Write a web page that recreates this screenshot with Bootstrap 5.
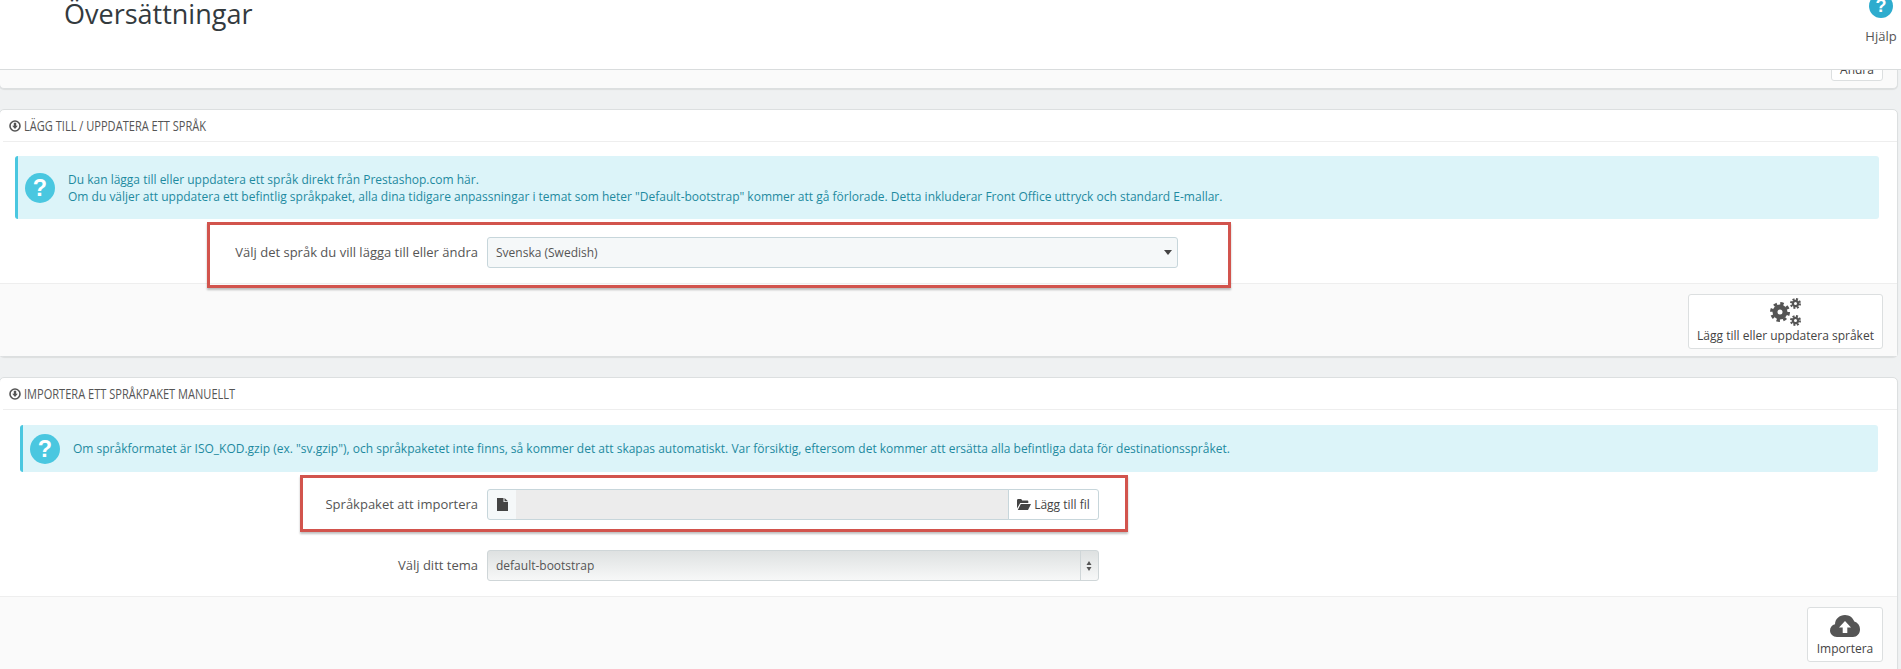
<!DOCTYPE html>
<html lang="sv">
<head>
<meta charset="utf-8">
<title>Översättningar</title>
<link href="https://cdn.jsdelivr.net/npm/bootstrap@5.3.0/dist/css/bootstrap.min.css" rel="stylesheet">
<style>
html,body{height:669px;overflow:hidden}
body{background:#eff1f2;font-family:"Open Sans",sans-serif;font-size:12px;color:#555;padding-right:3px}
.topbar{height:70px;margin-right:-3px;background:#fff;border-bottom:1px solid #d9dcdd;position:relative;z-index:3;overflow:hidden;padding:0 2px 0 64px}
.page-name{font-size:27px;line-height:30px;font-weight:400;color:#333a3e;margin:-1px 0 0}
.help-link{width:36px;margin-top:-6px;color:#555;font-size:13px;line-height:18px;text-align:center}
.help-link svg{display:block;margin:0 auto 9px}
.pane{background:#fff;border:1px solid #dcdfe0;border-radius:5px;box-shadow:0 1px 1px rgba(0,0,0,.08);margin:0 0 20px -1px}
.pane-stub{height:19px;background:#fafafa;border-top:0;border-radius:0 0 5px 5px;overflow:hidden;padding:0 14px 7px 0}
.pane-head{height:32px;margin:0 0 0 3px;border-bottom:1px solid #eeeeee;padding-left:6px;font-size:14px;color:#555;gap:3px}
.squeezed{display:inline-block;white-space:nowrap;transform:scaleX(.79);transform-origin:left center}
.tip{margin:14px 18px 0 15px;background:#dcf4f9;border-left:3px solid #4ac7e0;border-radius:3px;color:#1e8aa0;font-size:12px;line-height:17px;gap:13px;padding:0 12px 0 7px;height:63px}
.tip-two{margin:15px 19px 0 20px;height:47px}
.form-line{gap:9px;position:relative}
.line-lang{margin:18px 0 15px}
.lbl{width:478px;text-align:right;font-size:13px;color:#555}
.pick{width:691px;height:31px;background-color:#f5f8f9;border:1px solid #c7d6db;border-radius:3px;font-size:12px;color:#555;padding:0 8px;background-image:url("data:image/svg+xml,%3Csvg xmlns='http://www.w3.org/2000/svg' width='8' height='5'%3E%3Cpath d='M0 0h8L4 5z' fill='%23444'/%3E%3C/svg%3E");background-size:8px 5px;background-position:right 5px center}
.pick-native{width:612px;border-color:#cfd6d8;background-color:transparent;background-image:url("data:image/svg+xml,%3Csvg xmlns='http://www.w3.org/2000/svg' width='6' height='10'%3E%3Cpath d='M3 0l2.500 4h-5zM3 10L.5 6h5z' fill='%23555'/%3E%3C/svg%3E"),linear-gradient(#cfd6d8,#cfd6d8),linear-gradient(#dee1e1,#f7f8f8);background-size:6px 10px,1px 100%,100% 100%;background-position:right 6px center,right 17px top,0 0;background-repeat:no-repeat}
.filebox{width:612px;height:31px;flex-wrap:nowrap}
.filebox .input-group-text{width:30px;padding:0;justify-content:center;background:#f5f8f9;border-color:#c7d6db;border-radius:3px 0 0 3px}
.filebox .form-control{background:#ececec;border-color:#c7d6db;border-left:0;height:31px}
.filebox .btn{width:91px;padding:0;background:#fff;border:1px solid #c7d6db;border-radius:0 3px 3px 0;color:#444;font-size:12px;gap:3px}
.callout{position:absolute;border:3px solid #d2544d;box-shadow:0 2px 2px rgba(0,0,0,.25);z-index:2;pointer-events:none}
.callout-a{left:207px;width:1024px;top:-15px;height:66px}
.callout-b{left:300px;width:828px;top:-14px;height:57px}
.pane-foot{background:#fafafa;border-top:1px solid #eeeeee;padding:10px 14px 0 0}
.act{display:flex;flex-direction:column;align-items:center;justify-content:flex-end;background:#fff;border:1px solid #dcdfe0;border-radius:3px;padding:0 0 4px;height:55px;color:#444;font-size:12px;line-height:16px}
.act-wide{width:195px;margin-bottom:7px}
.act-wide svg{margin-bottom:2px}
.act-small{width:76px}
.act-small svg{margin-bottom:4px}
.edit-stub{width:52px;height:26px;flex:none;background:#fff;border:1px solid #dcdfe0;border-radius:3px;color:#444;text-align:center;padding-top:5px;line-height:18px;font-size:12px}
.gap-file{margin-top:17px}
.gap-theme{margin-top:30px}
.foot-tall{height:120px;margin-top:15px}
</style>
</head>
<body>
<header class="topbar d-flex justify-content-between align-items-start">
  <h1 class="page-name">Översättningar</h1>
  <div class="help-link">
    <svg width="24" height="24" viewBox="0 0 24 24"><circle cx="12" cy="12" r="12" fill="#2eacce"/><text x="12" y="18" text-anchor="middle" font-family="Liberation Sans" font-weight="700" font-size="18" fill="#fff">?</text></svg>
    Hjälp
  </div>
</header>

<div class="pane pane-stub d-flex justify-content-end align-items-end">
  <div class="edit-stub">Ändra</div>
</div>

<section class="pane">
  <div class="pane-head d-flex align-items-center">
    <svg width="12" height="12" viewBox="0 0 12 12"><circle cx="6" cy="6" r="5" fill="none" stroke="#555" stroke-width="1.6"/><path d="M4.800 2.800h2.400v3h1.600L6 9 3.200 5.800h1.600z" fill="#555"/></svg>
    <span class="squeezed">LÄGG TILL / UPPDATERA ETT SPRÅK</span>
  </div>
  <div class="tip d-flex align-items-center">
    <svg class="flex-shrink-0" width="30" height="30" viewBox="0 0 32 32"><circle cx="16" cy="16" r="16" fill="#4ac7e0"/><text x="16" y="25" text-anchor="middle" font-family="Liberation Sans" font-weight="700" font-size="25" fill="#fff">?</text></svg>
    <div>Du kan lägga till eller uppdatera ett språk direkt från Prestashop.com här.<br>Om du väljer att uppdatera ett befintlig språkpaket, alla dina tidigare anpassningar i temat som heter "Default-bootstrap" kommer att gå förlorade. Detta inkluderar Front Office uttryck och standard E-mallar.</div>
  </div>
  <div class="form-line line-lang d-flex align-items-center">
    <label class="lbl" for="langSel">Välj det språk du vill lägga till eller ändra</label>
    <select id="langSel" class="form-select pick"><option>Svenska (Swedish)</option></select>
    <div class="callout callout-a"></div>
  </div>
  <div class="pane-foot d-flex justify-content-end">
    <div class="act act-wide">
      <svg width="31" height="28" viewBox="0 0 31 28" fill="none" stroke="#555">
        <circle cx="10" cy="14" r="5" stroke-width="5"/><circle cx="10" cy="14" r="8.500" stroke-width="3" stroke-dasharray="3.400 3.276"/>
        <circle cx="25.500" cy="5.500" r="2.600" stroke-width="2.200"/><circle cx="25.500" cy="5.500" r="4.500" stroke-width="2" stroke-dasharray="2 1.530"/>
        <circle cx="25.500" cy="22.500" r="2.600" stroke-width="2.200"/><circle cx="25.500" cy="22.500" r="4.500" stroke-width="2" stroke-dasharray="2 1.530"/>
      </svg>
      Lägg till eller uppdatera språket
    </div>
  </div>
</section>

<section class="pane mb-0">
  <div class="pane-head d-flex align-items-center">
    <svg width="12" height="12" viewBox="0 0 12 12"><circle cx="6" cy="6" r="5" fill="none" stroke="#555" stroke-width="1.6"/><path d="M4.800 2.800h2.400v3h1.600L6 9 3.200 5.800h1.600z" fill="#555"/></svg>
    <span class="squeezed">IMPORTERA ETT SPRÅKPAKET MANUELLT</span>
  </div>
  <div class="tip tip-two d-flex align-items-center">
    <svg class="flex-shrink-0" width="30" height="30" viewBox="0 0 32 32"><circle cx="16" cy="16" r="16" fill="#4ac7e0"/><text x="16" y="25" text-anchor="middle" font-family="Liberation Sans" font-weight="700" font-size="25" fill="#fff">?</text></svg>
    <div>Om språkformatet är ISO_KOD.gzip (ex. "sv.gzip"), och språkpaketet inte finns, så kommer det att skapas automatiskt. Var försiktig, eftersom det kommer att ersätta alla befintliga data för destinationsspråket.</div>
  </div>
  <div class="form-line gap-file d-flex align-items-center">
    <label class="lbl" for="packFile">Språkpaket att importera</label>
    <div class="input-group filebox">
      <span class="input-group-text"><svg width="11" height="13" viewBox="0 0 11 13"><path d="M0 0h6.500v4H11v9H0zM7.500 0L11 3.200H7.500z" fill="#444"/></svg></span>
      <input id="packFile" class="form-control" type="text" disabled>
      <button class="btn d-flex align-items-center justify-content-center" type="button"><svg width="14" height="11" viewBox="0 0 14 11"><path d="M0 1.500C0 .7.5 0 1.200 0h3l1 1.500h5c.7 0 1.100.4 1.100 1V4H3.200L0 9.500zM3.800 5H14l-3 6H.8z" fill="#444"/></svg>Lägg till fil</button>
    </div>
    <div class="callout callout-b"></div>
  </div>
  <div class="form-line gap-theme d-flex align-items-center">
    <label class="lbl" for="themeSel">Välj ditt tema</label>
    <select id="themeSel" class="form-select pick pick-native"><option>default-bootstrap</option></select>
  </div>
  <div class="pane-foot foot-tall d-flex justify-content-end">
    <div class="act act-small">
      <svg width="30" height="22" viewBox="0 0 30 22"><path d="M7 22C3 22 0 19 0 15.500 0 12.500 2 10 5 9.300 5 4 9.500 0 15 0c4.500 0 8 2.800 9.300 6.600C27.600 7.600 30 10.500 30 14.500 30 18.700 26.800 22 23 22z" fill="#555"/><path d="M15 6l6 6.500h-3.700V18h-4.600v-5.500H9z" fill="#fff"/></svg>
      Importera
    </div>
  </div>
</section>
</body>
</html>
